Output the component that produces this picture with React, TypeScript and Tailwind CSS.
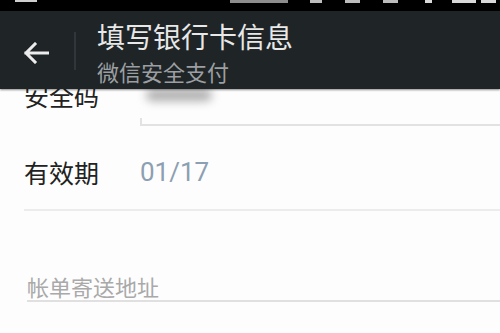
const cjk = "font-['Noto_Sans_CJK_SC','Noto_Sans',sans-serif]";

function StatusBar() {
  // only the lower edge of the status icons is visible in the shot
  return (
    <div className="relative h-[11px] shrink-0 bg-black">
      <div className="flex h-[3px] items-start">
        <span className="ml-[15px] h-[2px] w-[22px] bg-[#cfcfcf]" />
        <span className="ml-[193px] h-[3px] w-[58px] bg-[#8d8d8d]" />
        <span className="ml-[22px] h-[3px] w-[12px] bg-[#bdbdbd]" />
        <span className="ml-[23px] h-[3px] w-[15px] bg-[#bdbdbd]" />
        <span className="ml-[23px] h-[3px] w-[15px] bg-[#bdbdbd]" />
        <span className="ml-[27px] h-[3px] w-[7px] bg-[#d9d9d9]" />
        <span className="ml-[20px] h-[3px] w-[24px] bg-[#d9d9d9]" />
        <span className="ml-[5px] h-[3px] w-[15px] bg-[#d9d9d9]" />
      </div>
    </div>
  );
}

function Header() {
  return (
    <header className="relative z-10 flex h-[78px] shrink-0 bg-[#1f2427] shadow-[0_1px_2px_rgba(0,0,0,0.45)]">
      <div className="flex items-center pl-[23px] pt-[5px]">
        <svg width="26" height="22" viewBox="0 0 26 22" fill="none">
          <path
            d="M25 11H3M12 2L3 11L12 20"
            stroke="#ececec"
            strokeWidth="3"
            strokeLinecap="square"
          />
        </svg>
      </div>
      <div className="ml-[25px] mt-[21px] h-[38px] w-[2px] bg-[#30363a]" />
      <div className={`ml-[21px] flex flex-col pt-[10px] ${cjk}`}>
        <p className="h-[30px] text-[28px] leading-[30px] text-[#e8e8e8]">填写银行卡信息</p>
        <p className="mt-[7px] h-[26px] text-[22px] leading-[26px] text-[#9c9fa1]">微信安全支付</p>
      </div>
    </header>
  );
}

export default function App() {
  return (
    <div className="flex h-[333px] w-[500px] flex-col overflow-hidden bg-[#fdfdfd]">
      <StatusBar />
      <Header />

      <main className={`flex flex-col ${cjk}`}>
        {/* 安全码 row, scrolled partly under the header */}
        <div className="-mt-[20px] flex h-[57px]">
          <p className="mt-[14px] w-[140px] shrink-0 pl-[24px] text-[25px] leading-[25px] text-[#222]">
            安全码
          </p>
          <div className="relative flex-1 border-b-2 border-[#e2e2e2]">
            <div className="absolute left-0 -bottom-[2px] h-[8px] w-[2px] bg-[#e2e2e2]" />
            <div className="absolute left-[6px] top-[20px] h-[12px] w-[66px] rounded-full bg-[#adadad] blur-[5px]" />
          </div>
        </div>

        {/* 有效期 row */}
        <div className="ml-[24px] flex h-[85px] items-start border-b-2 border-[#ececec] pt-[34px]">
          <p className="w-[116px] shrink-0 text-[25px] leading-[25px] text-[#222]">有效期</p>
          <p className="font-['Roboto',sans-serif] text-[26px] leading-[25px] text-[#8d9fb2]">01/17</p>
        </div>

        {/* 帐单寄送地址 */}
        <div className="ml-[27px] mt-[64px] border-b-2 border-[#e0e0e0] pb-[3px]">
          <p className="text-[22px] leading-[22px] text-[#a9a9a9]">帐单寄送地址</p>
        </div>
      </main>
    </div>
  );
}
